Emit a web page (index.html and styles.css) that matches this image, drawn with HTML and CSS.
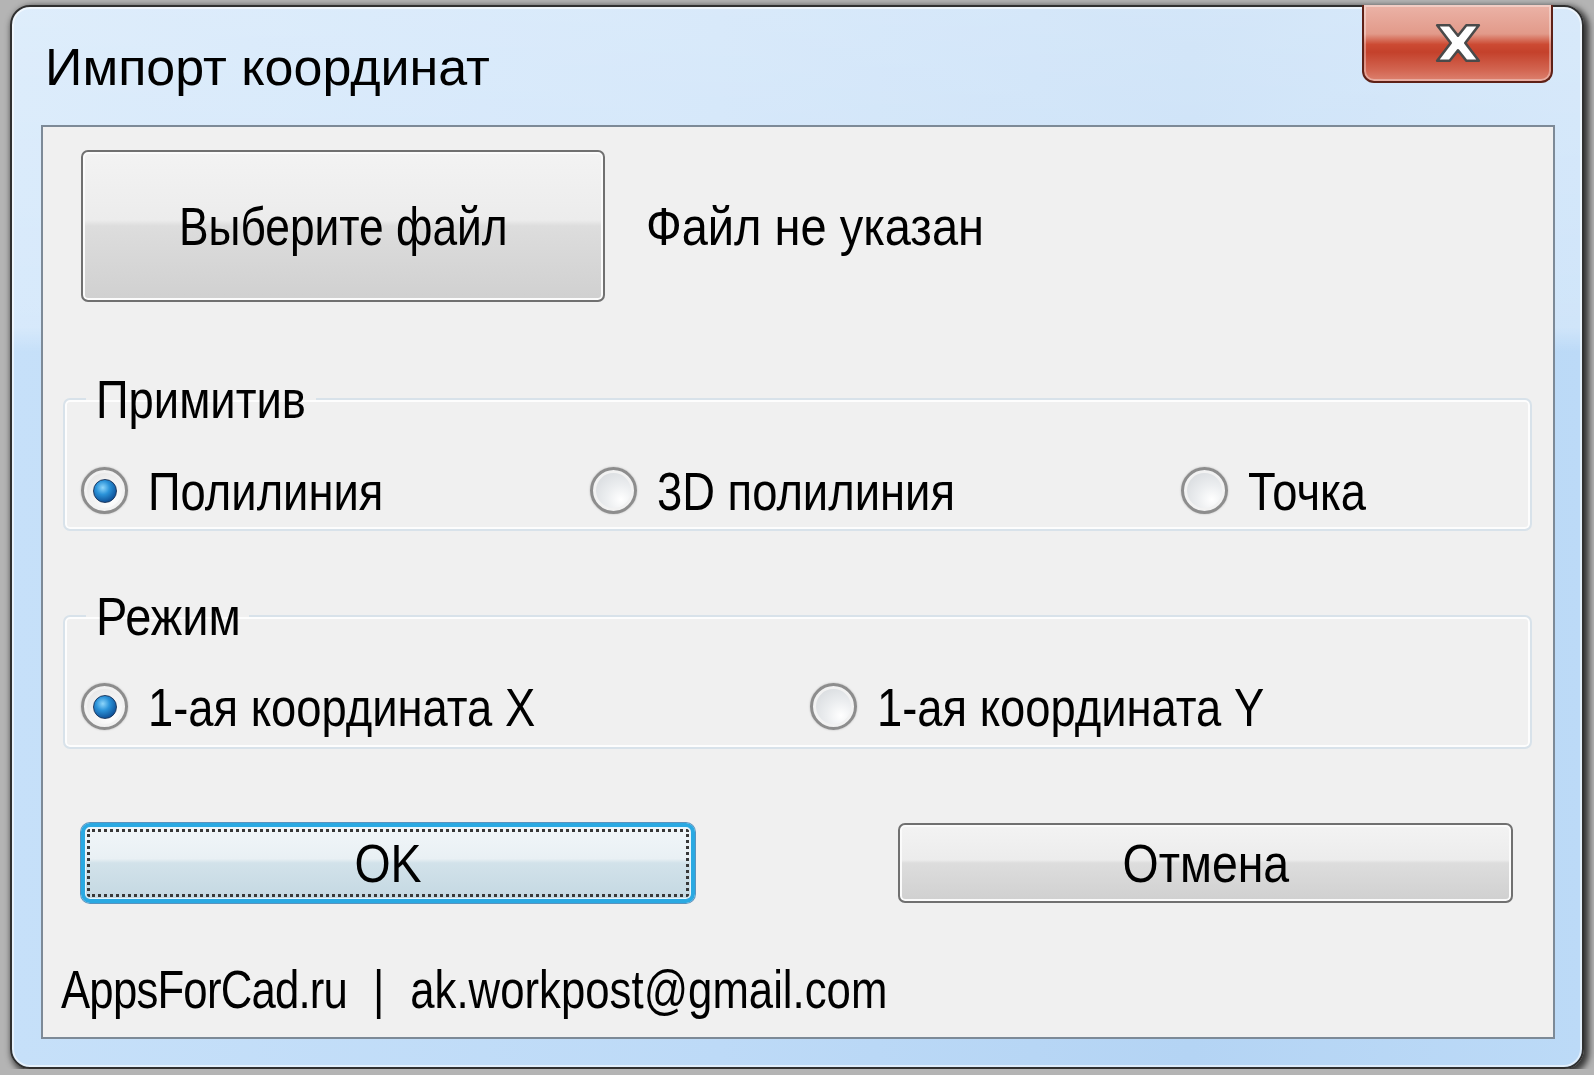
FILE: index.html
```html
<!DOCTYPE html>
<html lang="ru">
<head>
    <meta charset="UTF-8">
    <meta name="viewport" content="width=device-width, initial-scale=1.0">
    <title>Импорт координат</title>
    <link rel="stylesheet" href="styles.css">
</head>
<body>
    <div class="window">
        <div class="titlebar">
            <span class="title">Импорт координат</span>
            <button class="close-btn" aria-label="Закрыть">
                <svg width="50" height="40" viewBox="0 0 48 38">
                    <polygon points="4,2 16,2 24,12 32,2 44,2 31,19 44,36 32,36 24,26 16,36 4,36 17,19"
                             fill="#ffffff" stroke="#4a4a4a" stroke-width="2.5" stroke-linejoin="round"/>
                </svg>
            </button>
        </div>

        <div class="client">
            <div class="file-row">
                <button class="btn btn-file"><span class="txt">Выберите файл</span></button>
                <span class="file-label"><span class="txt">Файл не указан</span></span>
            </div>

            <fieldset class="group group-primitive">
                <legend><span class="txt">Примитив</span></legend>
                <div class="options options-primitive">
                    <label class="option"><span class="radio checked"><span class="dot"></span></span><span class="txt">Полилиния</span></label>
                    <label class="option"><span class="radio"></span><span class="txt">3D полилиния</span></label>
                    <label class="option"><span class="radio"></span><span class="txt">Точка</span></label>
                </div>
            </fieldset>

            <fieldset class="group group-mode">
                <legend><span class="txt">Режим</span></legend>
                <div class="options options-mode">
                    <label class="option"><span class="radio checked"><span class="dot"></span></span><span class="txt">1-ая координата X</span></label>
                    <label class="option"><span class="radio"></span><span class="txt">1-ая координата Y</span></label>
                </div>
            </fieldset>

            <div class="actions">
                <button class="btn btn-ok"><span class="focus"><span class="txt">OK</span></span></button>
                <button class="btn btn-cancel"><span class="txt">Отмена</span></button>
            </div>

            <div class="footer"><span class="txt"><span class="site">AppsForCad.ru</span><span class="sep">|</span>ak.workpost@gmail.com</span></div>
        </div>
    </div>
</body>
</html>
```

FILE: styles.css
```css
body {
    margin: 0;
    padding: 5px 0 0 10px;
    background: #b4b4b4;
    font-family: "Liberation Sans", Arial, sans-serif;
    font-size: 54px;
    color: #000;
    overflow: hidden;
}
/* the dialog font is a narrow bitmap face, squeeze the text */
.txt {
    display: inline-block;
    white-space: nowrap;
    transform: scaleX(0.84);
    transform-origin: left center;
}
.window {
    box-sizing: border-box;
    width: 1574px;
    height: 1064px;
    border: 2px solid #303030;
    border-radius: 20px;
    padding: 0 27px 28px 29px;
    display: flex;
    flex-direction: column;
    background:
        linear-gradient(180deg, rgba(255,255,255,0.42) 0, rgba(255,255,255,0.3) 320px, rgba(255,255,255,0) 345px),
        linear-gradient(90deg, #c6e0f9 0%, #bddaf7 45%, #b4d4f4 75%, #bcdaf7 100%);
    box-shadow: inset 0 0 0 2px rgba(255,255,255,0.55), 3px 3px 6px 2px rgba(0,0,0,0.7);
}
.titlebar {
    height: 118px;
    flex-shrink: 0;
    display: flex;
    justify-content: space-between;
    align-items: flex-start;
}
.title {
    font-size: 52px;
    line-height: 52px;
    margin: 34px 0 0 4px;
}
.close-btn {
    width: 191px;
    height: 78px;
    margin: -2px 2px 0 0;
    padding: 0;
    border: 2px solid #5e2117;
    border-top: none;
    border-radius: 0 0 12px 12px;
    display: flex;
    align-items: center;
    justify-content: center;
    background: linear-gradient(180deg, #ebb3a7 0%, #e29a8a 38%, #cc4a33 52%, #c4412b 62%, #d26450 85%, #dd8270 100%);
    box-shadow: inset 0 0 0 2px rgba(255,255,255,0.35);
}
.client {
    flex: 1;
    border: 2px solid #7d8a97;
    background: #f0f0f0;
    display: flex;
    flex-direction: column;
}
.file-row {
    display: flex;
    align-items: center;
    margin: 23px 0 0 38px;
}
.btn {
    font-family: inherit;
    font-size: 54px;
    color: #000;
    border: 2px solid #707070;
    border-radius: 7px;
    padding: 0;
    background: linear-gradient(180deg, #f3f3f3 0%, #ececec 46%, #dddddd 50%, #d0d0d0 100%);
    box-shadow: inset 0 0 0 2px #fbfbfb;
}
.btn .txt {
    transform-origin: center center;
}
.btn-file {
    width: 524px;
    height: 152px;
}
.btn-file .txt {
    transform: scaleX(0.82);
}
.file-label {
    margin-left: 41px;
}
.file-label .txt {
    transform: scaleX(0.87);
}
.group {
    margin: 70px 21px 0 20px;
    padding: 0;
    border: 2px solid #d8e2ea;
    border-radius: 7px;
    box-shadow: inset 0 0 0 2px #fdfdfd;
}
.group legend {
    margin-left: 21px;
    padding: 0 10px;
    line-height: 54px;
}
.group-primitive legend .txt {
    width: 210px;
}
.group-mode legend .txt {
    width: 143px;
    transform: scaleX(0.87);
}
.group-primitive .options {
    padding: 41px 0 15px 16px;
}
.group-mode {
    margin-top: 58px;
}
.group-mode .options {
    padding: 40px 0 17px 16px;
}
.options {
    display: grid;
}
.options-primitive {
    grid-template-columns: 509px 591px auto;
}
.options-mode {
    grid-template-columns: 729px auto;
}
.option {
    display: flex;
    align-items: center;
    height: 47px;
    line-height: 54px;
}
.radio {
    box-sizing: border-box;
    width: 47px;
    height: 47px;
    margin-right: 20px;
    border-radius: 50%;
    border: 3px solid #8d8d8d;
    box-shadow: 0 0 2px #b5b5b5, inset 0 0 0 3px #f2f2f2;
    background: radial-gradient(circle at 68% 72%, #ffffff 0, #eceef0 35%, #cfd3d7 100%);
    display: flex;
    align-items: center;
    justify-content: center;
    flex-shrink: 0;
}
.radio.checked {
    background: radial-gradient(circle at 65% 70%, #ffffff 0, #f1f1f1 50%, #dcdcdc 100%);
}
.dot {
    width: 22px;
    height: 22px;
    border-radius: 50%;
    border: 1px solid #1f3b62;
    background: radial-gradient(circle at 40% 35%, #8ed6fb 0, #2b93d9 35%, #0f5299 75%, #0a3466 100%);
}
.actions {
    display: flex;
    gap: 203px;
    margin: 74px 0 0 38px;
}
.btn-ok, .btn-cancel {
    height: 80px;
}
.btn-ok .txt, .btn-cancel .txt {
    transform: scaleX(0.86);
}
.btn-ok {
    width: 614px;
    border: 4px solid #2aa9e2;
    border-radius: 9px;
    background: linear-gradient(180deg, #f1f6f9 0%, #e9f0f4 44%, #d2e2ea 50%, #c4d8e2 100%);
    box-shadow: 0 0 0 1px #5a93be, inset 0 0 0 1px #e6f6fd;
    padding: 2px;
}
.btn-ok .focus {
    display: flex;
    align-items: center;
    justify-content: center;
    height: 100%;
    box-sizing: border-box;
    border: 3px dotted #383838;
    border-radius: 3px;
}
.btn-cancel {
    width: 615px;
}
.footer {
    margin: 59px 0 0 18px;
    line-height: 54px;
}
.footer .txt {
    transform: scaleX(0.81);
}
.site {
    letter-spacing: -1px;
}
.sep {
    margin: 0 32px;
}
```
